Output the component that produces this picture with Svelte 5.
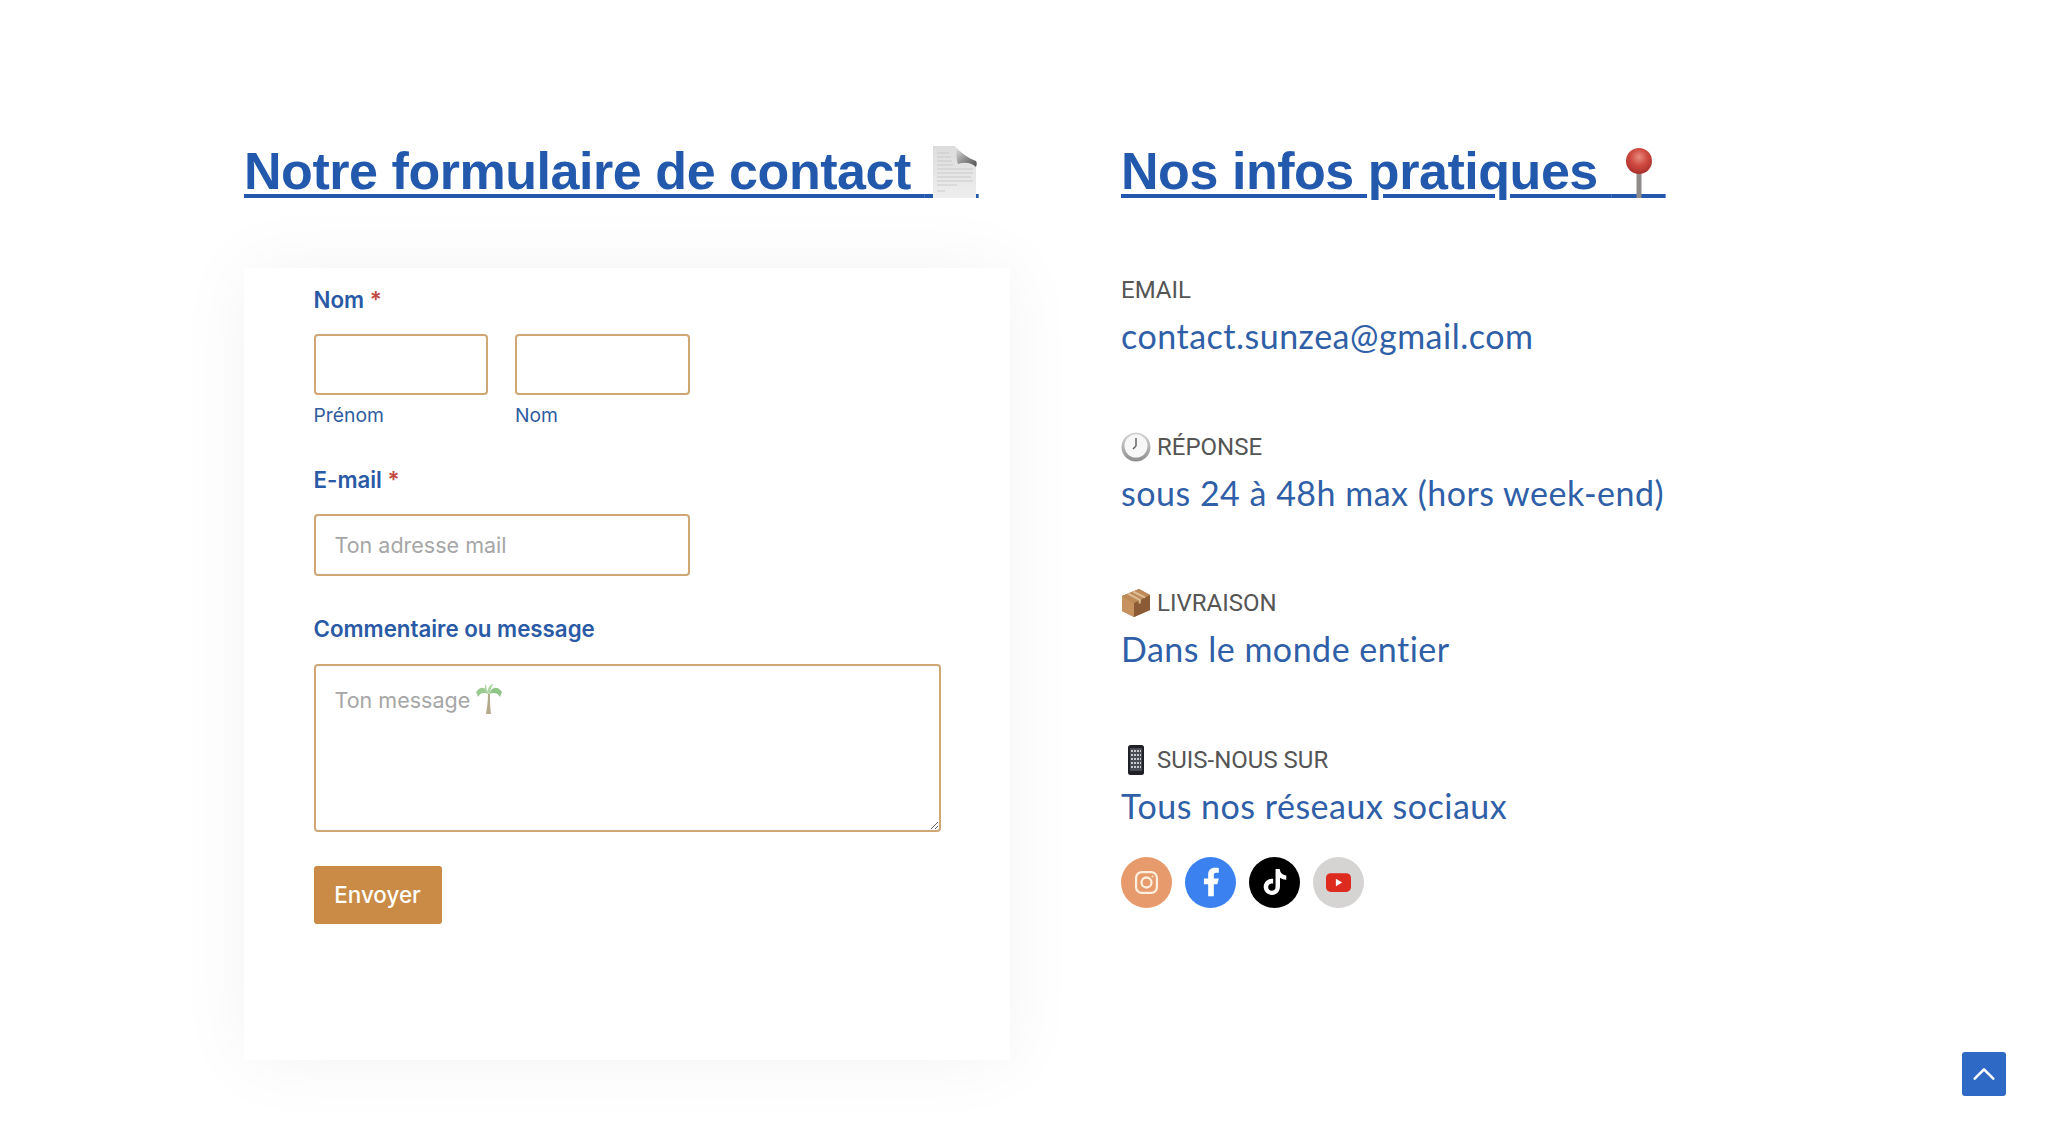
<script lang="ts">
  const infos = [
    { icon: "", label: "EMAIL", value: "contact.sunzea@gmail.com" },
    { icon: "clock", label: "RÉPONSE", value: "sous 24 à 48h max (hors week-end)" },
    { icon: "box", label: "LIVRAISON", value: "Dans le monde entier" },
    { icon: "phone", label: "SUIS-NOUS SUR", value: "Tous nos réseaux sociaux" },
  ];
</script>

<main class="page">
  <section class="left">
    <h2>
      <a href="#contact">Notre formulaire de contact <span class="emoji-slot doc">&nbsp;&nbsp;&nbsp;&nbsp;
        <svg viewBox="0 0 46 54" width="46" height="54" aria-hidden="true">
          <defs>
            <linearGradient id="paper" x1="0" y1="0" x2="0" y2="1">
              <stop offset="0" stop-color="#dcdcdc" />
              <stop offset="1" stop-color="#eeeeee" />
            </linearGradient>
            <linearGradient id="fold" x1="0" y1="0" x2="1" y2="1">
              <stop offset="0" stop-color="#efefef" />
              <stop offset="0.55" stop-color="#8d8d8d" />
              <stop offset="1" stop-color="#4f4f4f" />
            </linearGradient>
          </defs>
          <path d="M1 1h22c4 6 6 12 21 17v35H1z" fill="url(#paper)" />
          <path d="M5 8h12M5 12h14M5 16h15M5 20h16M5 24h36M5 28h36M5 32h34M5 36h36M5 40h20M5 46h8" stroke="#c9c9c9" stroke-width="1.2" />
          <path d="M23 1c2 7 1 13 3 18 6-2 13-2 18 3 1-3 1-4 0-6C36 13 29 8 23 1z" fill="url(#fold)" />
        </svg>
      </span></a>
    </h2>

    <form class="card" onsubmit={(e) => e.preventDefault()}>
      <div class="field-label">Nom <span class="req">*</span></div>
      <div class="name-row">
        <label class="name-col">
          <input type="text" />
          <span class="sub">Prénom</span>
        </label>
        <label class="name-col">
          <input type="text" />
          <span class="sub">Nom</span>
        </label>
      </div>

      <label class="field-label spaced" for="mail">E-mail <span class="req">*</span></label>
      <input id="mail" class="mail" type="email" placeholder="Ton adresse mail" />

      <label class="field-label spaced" for="msg">Commentaire ou message</label>
      <div class="area-wrap">
        <textarea id="msg" placeholder="Ton message"></textarea>
        <svg class="palm" viewBox="0 0 28 32" width="28" height="32" aria-hidden="true">
          <path d="M13 11c0 7-1 14-2 20h5c-1-6-1-13-1-20z" fill="#b5a98c" />
          <path d="M14 11C11 3 5 3 1 9c1 1 1 3 2 5 2-4 6-5 11-3z" fill="#9ccb92" />
          <path d="M14 11c3-8 9-8 13-2-1 1-1 3-2 5-2-4-6-5-11-3z" fill="#8fc487" />
          <path d="M14 11C11 6 15 1 19 1c-3 2-3 6-5 10zM14 11C9 9 9 3 11 1c0 4 1 7 3 10z" fill="#acd6a1" />
        </svg>
      </div>

      <button type="submit">Envoyer</button>
    </form>
  </section>

  <section class="right">
    <h2>
      <a href="#infos">Nos infos pratiques <span class="emoji-slot pin">&nbsp;&nbsp;&nbsp;&nbsp;
        <svg viewBox="0 0 30 52" width="30" height="52" aria-hidden="true">
          <defs>
            <radialGradient id="ball" cx="0.5" cy="0.35" r="0.65">
              <stop offset="0" stop-color="#e88d80" />
              <stop offset="0.5" stop-color="#cf4a40" />
              <stop offset="1" stop-color="#a92f2c" />
            </radialGradient>
          </defs>
          <rect x="12.5" y="24" width="5" height="27" fill="#8f8b88" />
          <circle cx="15" cy="14" r="13" fill="url(#ball)" />
        </svg>
      </span></a>
    </h2>

    <div class="infos">
      {#each infos as info (info.label)}
        <div class="info">
          <div class="info-label">
            {#if info.icon === "clock"}
              <svg viewBox="0 0 30 30" width="30" height="30" aria-hidden="true">
                <defs>
                  <linearGradient id="rim" x1="0" y1="0" x2="0" y2="1">
                    <stop offset="0" stop-color="#d8d8d8" />
                    <stop offset="1" stop-color="#8e8e8e" />
                  </linearGradient>
                </defs>
                <circle cx="15" cy="15" r="14.5" fill="url(#rim)" />
                <circle cx="15" cy="14" r="11.5" fill="#f7f7f7" />
                <path d="M15 14V6M15 14l-3 3" stroke="#666" stroke-width="1.5" fill="none" />
              </svg>
            {:else if info.icon === "box"}
              <svg viewBox="0 0 30 30" width="30" height="30" aria-hidden="true">
                <path d="M1 8l17-7 11 6v15l-16 7-12-6z" fill="#a87345" />
                <path d="M1 8l12 7v14L1 23z" fill="#c69360" />
                <path d="M13 15l16-8v15l-16 7z" fill="#8a5b34" />
                <path d="M1 8l17-7 11 6-16 8z" fill="#bd8a58" />
                <path d="M7 5.500l12 6.500-.5 3.500M12 3.500l12 6" stroke="#dcbc92" stroke-width="2" fill="none" />
              </svg>
            {:else if info.icon === "phone"}
              <svg viewBox="0 0 30 30" width="30" height="30" aria-hidden="true">
                <rect x="7" y="0" width="16" height="30" rx="2.500" fill="#1f2126" />
                <rect x="9" y="3" width="12" height="23" fill="#4a4d55" />
                <path d="M10 6h10M10 10h10M10 14h10M10 18h10M10 22h10" stroke="#c6c8cc" stroke-width="2" stroke-dasharray="2 1" />
              </svg>
            {/if}
            <span>{info.label}</span>
          </div>
          <div class="info-value">{info.value}</div>
        </div>
      {/each}
    </div>

    <div class="socials">
      <a class="social insta" href="#instagram" aria-label="Instagram">
        <svg viewBox="0 0 24 24" width="25" height="25" fill="none" stroke="#fdeedd" stroke-width="2.200">
          <rect x="2" y="2" width="20" height="20" rx="5.500" />
          <circle cx="12" cy="12" r="4.800" />
          <circle cx="17.800" cy="6.200" r="0.900" fill="#fdeedd" stroke="none" />
        </svg>
      </a>
      <a class="social fb" href="#facebook" aria-label="Facebook">
        <svg viewBox="0 0 24 24" width="34" height="34" fill="#fff">
          <path d="M14 13.500h2.500l1-4H14v-2c0-1.030 0-2 2-2h1.500V2.140c-.326-.043-1.557-.14-2.857-.14C11.928 2 10 3.657 10 6.700v2.800H7v4h3V22h4v-8.500z" />
        </svg>
      </a>
      <a class="social tt" href="#tiktok" aria-label="TikTok">
        <svg viewBox="0 0 24 24" width="26" height="26" fill="#fff">
          <path d="M12.525.02c1.31-.02 2.610-.01 3.910-.02.080 1.530.630 3.090 1.750 4.170 1.120 1.110 2.700 1.620 4.240 1.790v4.030c-1.440-.050-2.890-.350-4.200-.970-.570-.260-1.100-.590-1.620-.930-.010 2.920.010 5.840-.020 8.750-.080 1.400-.540 2.790-1.350 3.940-1.310 1.920-3.580 3.170-5.910 3.210-1.430.080-2.860-.310-4.080-1.030-2.020-1.190-3.440-3.370-3.650-5.710-.020-.500-.030-1-.010-1.490.180-1.900 1.120-3.720 2.580-4.960 1.660-1.440 3.980-2.130 6.150-1.720.020 1.480-.040 2.960-.040 4.440-.990-.320-2.150-.230-3.020.370-.630.410-1.110 1.040-1.360 1.750-.210.510-.150 1.070-.140 1.610.240 1.640 1.820 3.020 3.500 2.870 1.120-.010 2.190-.660 2.770-1.610.190-.330.400-.670.410-1.060.100-1.790.060-3.570.070-5.360.010-4.030-.010-8.050.020-12.070z" />
        </svg>
      </a>
      <a class="social yt" href="#youtube" aria-label="YouTube">
        <svg viewBox="0 0 24 18" width="25" height="19">
          <rect x="0" y="0" width="24" height="18" rx="4.500" fill="#dd2c1f" />
          <path d="M9.500 5.500v7l6-3.500z" fill="#fff" />
        </svg>
      </a>
    </div>
  </section>

  <a class="to-top" href="#top" aria-label="Haut de page">
    <svg viewBox="0 0 24 24" width="28" height="28" fill="none" stroke="#fff" stroke-width="2.200" stroke-linecap="round" stroke-linejoin="round">
      <path d="M4 16l8-8 8 8" />
    </svg>
  </a>
</main>

<style>
  :global(body) {
    background: #fff;
  }
  .page {
    position: relative;
    box-sizing: border-box;
    height: 1137px;
    overflow: hidden;
    display: grid;
    grid-template-columns: 766px 1fr;
    column-gap: 111px;
    padding: 141px 0 0 244px;
    font-family: Roboto, "Liberation Sans", sans-serif;
  }
  h2 {
    margin: 0;
    font: bold 52px/60px "Liberation Sans", Arial, sans-serif;
    letter-spacing: -0.45px;
    white-space: nowrap;
  }
  h2 a {
    color: #2259ad;
    text-decoration: underline;
    text-decoration-thickness: 4px;
    text-underline-offset: 5px;
  }
  .emoji-slot {
    position: relative;
    letter-spacing: -1px;
  }
  .emoji-slot svg {
    position: absolute;
    left: 7px;
    bottom: 1px;
  }
  .emoji-slot.pin svg {
    left: 12px;
  }
  .card {
    box-sizing: border-box;
    height: 792px;
    margin-top: 67px;
    padding: 18px 69px 0 69.500px;
    background: #fff;
    box-shadow: 0 0 70px rgba(0, 0, 0, 0.05);
    display: flex;
    flex-direction: column;
    align-items: flex-start;
  }
  .field-label {
    font: 600 22.300px/28px Inter, Roboto, sans-serif;
    color: #2a5aa5;
  }
  .field-label.spaced {
    margin-top: 39px;
  }
  .req {
    color: #c24a40;
  }
  .name-row {
    display: flex;
    gap: 27px;
    margin-top: 20px;
  }
  .name-col {
    display: flex;
    flex-direction: column;
    gap: 8px;
  }
  .sub {
    font: 400 19.300px/24px Inter, Roboto, sans-serif;
    color: #2f5c9f;
  }
  input,
  textarea {
    box-sizing: border-box;
    display: block;
    background: #fff;
    border: 2px solid #d0a674;
    border-radius: 4px;
    outline: none;
    font: 400 21.500px/30px Inter, Roboto, sans-serif;
    color: #333;
  }
  input::placeholder,
  textarea::placeholder {
    color: #a6a6a6;
    opacity: 1;
  }
  .name-col input {
    width: 174.500px;
    height: 61px;
  }
  input.mail {
    width: 376.500px;
    height: 62px;
    margin-top: 20px;
    padding: 0 19px;
  }
  .area-wrap {
    position: relative;
    margin-top: 21px;
  }
  textarea {
    width: 627.500px;
    height: 168px;
    padding: 19px;
    resize: vertical;
  }
  .palm {
    position: absolute;
    left: 161px;
    top: 19px;
  }
  button {
    margin-top: 34px;
    width: 128px;
    height: 58px;
    border: 0;
    border-radius: 3px;
    background: #c98b46;
    color: #fff;
    font: 500 22.400px/30px Inter, Roboto, sans-serif;
    cursor: pointer;
  }
  .infos {
    display: flex;
    flex-direction: column;
    gap: 70.500px;
    margin-top: 74px;
  }
  .info-label {
    display: flex;
    align-items: center;
    gap: 6px;
    height: 30px;
    font: 400 24px/30px Roboto, sans-serif;
    color: #555;
  }
  .info-value {
    margin-top: 6px;
    font: 400 34px/50px Lato, "Open Sans", sans-serif;
    letter-spacing: 0.5px;
    color: #2f60a7;
  }
  .socials {
    display: flex;
    gap: 13px;
    margin-top: 26px;
  }
  .social {
    width: 51px;
    height: 51px;
    border-radius: 50%;
    display: flex;
    align-items: center;
    justify-content: center;
  }
  .insta {
    background: #e79a6b;
  }
  .fb {
    background: #3b82f0;
  }
  .tt {
    background: #000;
  }
  .yt {
    background: #d6d3d3;
  }
  .to-top {
    position: absolute;
    left: 1962px;
    top: 1052px;
    width: 44px;
    height: 44px;
    border-radius: 3px;
    background: #2f69c6;
    display: flex;
    align-items: center;
    justify-content: center;
  }
</style>
